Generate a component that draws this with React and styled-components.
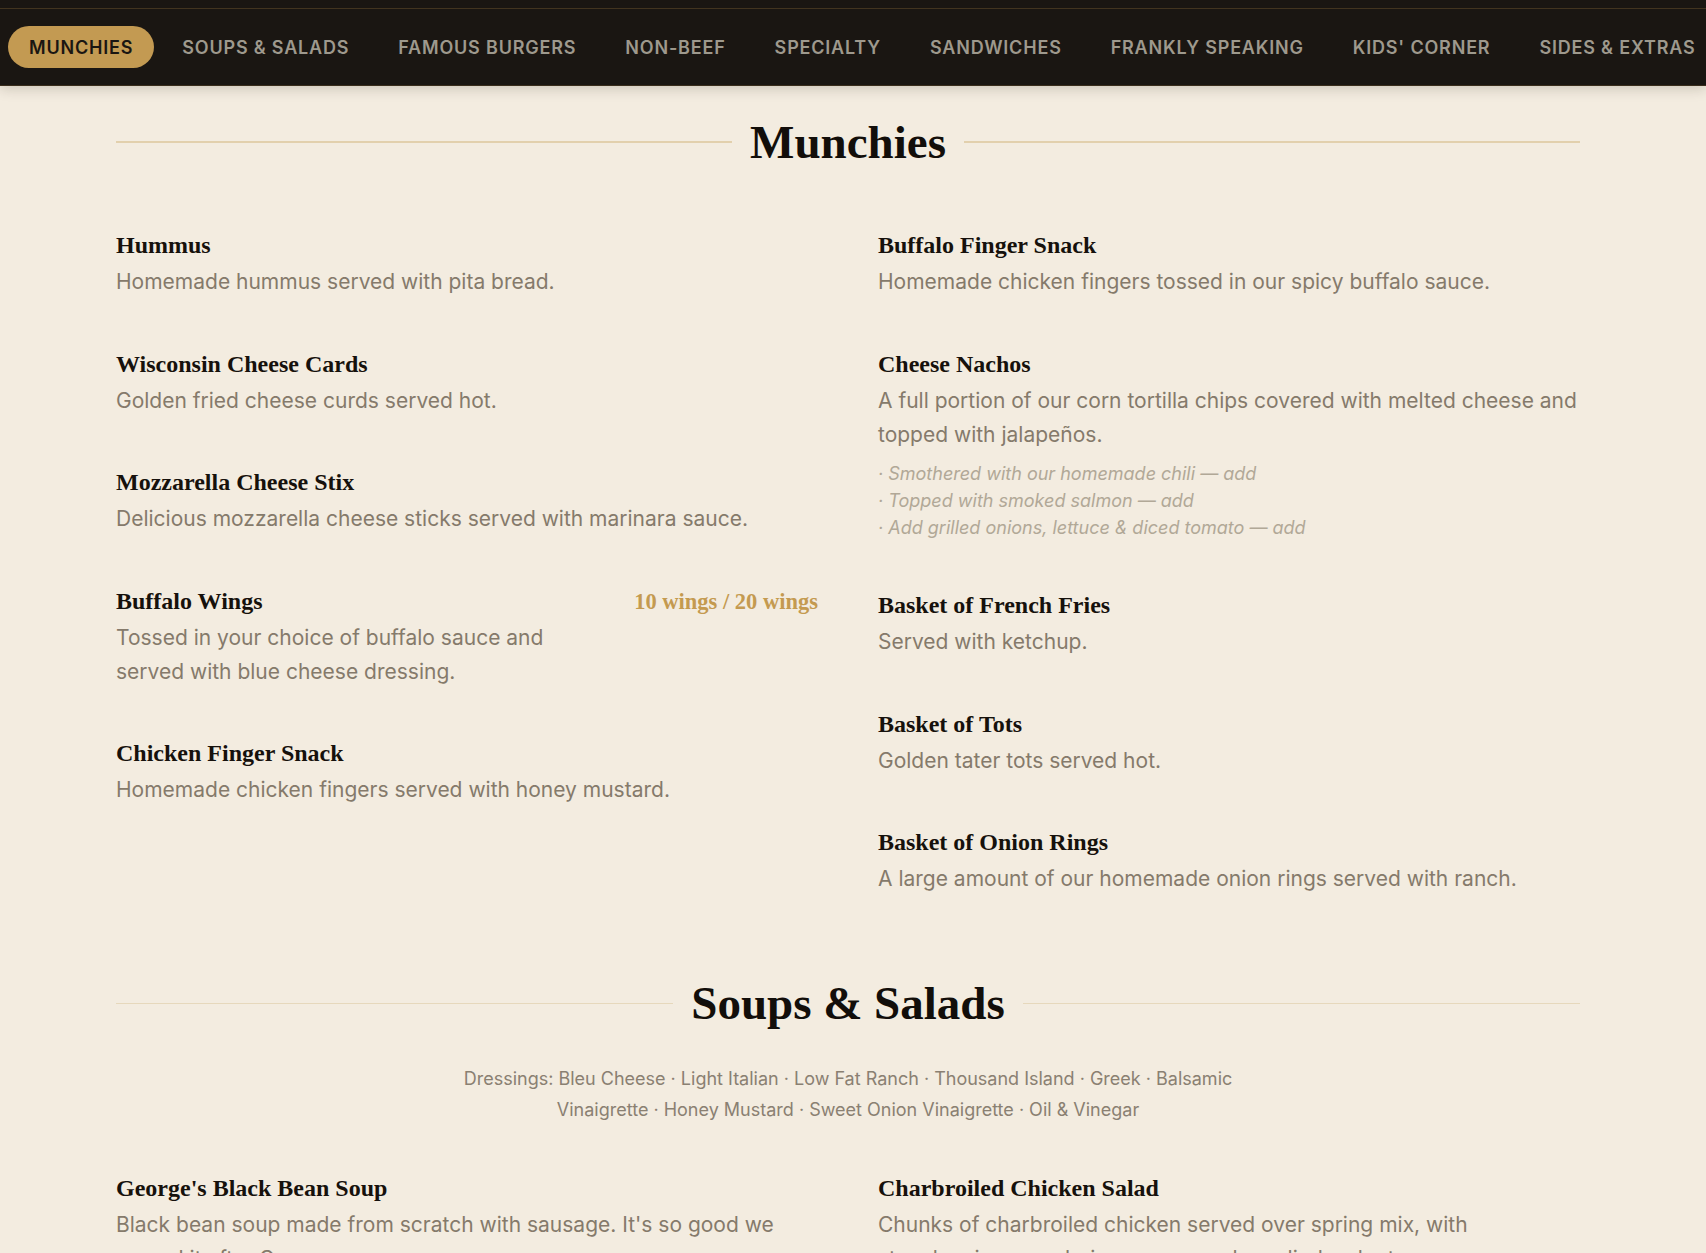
import React from 'react'
import styled, { createGlobalStyle } from 'styled-components';

const GlobalStyle = createGlobalStyle`
    body {
        margin: 0;
        background-color: #f3ece0;
        font-family: Inter, "Noto Sans", sans-serif;
    }
`;

const Header = styled.header`
    background-color: #1a1612;
    border-top: 8px solid #1a1612;
    box-shadow: 0 3px 12px rgba(40, 28, 12, 0.18);
`;

const NavBar = styled.nav`
    display: flex;
    align-items: center;
    gap: 7px;
    height: 76px;
    padding: 0 8px;
    overflow: hidden;
    border-top: 1px solid #42341f;
    border-bottom: 1px solid #3a2d1c;
`;

const NavItem = styled.a`
    flex-shrink: 0;
    display: flex;
    align-items: center;
    height: 42px;
    padding: 0 21px;
    border-radius: 21px;
    font-size: 18px;
    font-weight: 600;
    letter-spacing: 0.045em;
    text-transform: uppercase;
    white-space: nowrap;
    text-decoration: none;
    color: ${({ $active }) => ($active ? '#1a1612' : '#9e998d')};
    background-color: ${({ $active }) => ($active ? '#c39a52' : 'transparent')};
`;

const Main = styled.main`
    width: 1464px;
    margin-left: 116px;
`;

const Section = styled.section`
    padding: 28px 0 51px;
`;

const TitleRow = styled.div`
    display: flex;
    align-items: center;
    gap: 18px;
    margin-bottom: ${({ $compact }) => ($compact ? '33px' : '60px')};
`;

const Rule = styled.div`
    flex: 1;
    height: ${({ $active }) => ($active ? '2px' : '1px')};
    background-color: ${({ $active }) => ($active ? '#e2d0ad' : '#e6d8bc')};
`;

const Title = styled.h2`
    margin: 0;
    font-family: "Liberation Serif", "Times New Roman", serif;
    font-weight: 700;
    font-size: 47px;
    line-height: 56px;
    color: #120e0a;
`;

const Note = styled.p`
    max-width: 800px;
    margin: 0 auto 48px;
    text-align: center;
    font-size: 18px;
    line-height: 30.5px;
    color: #8a8072;
`;

const Grid = styled.div`
    display: grid;
    grid-template-columns: 1fr 1fr;
    column-gap: 60px;
    align-items: start;
`;

const Column = styled.div`
    display: flex;
    flex-direction: column;
    gap: 49.6px;
`;

const Item = styled.div`
    display: flex;
    flex-direction: column;
`;

const ItemHead = styled.div`
    display: flex;
    justify-content: space-between;
    align-items: baseline;
    gap: 20px;
`;

const Name = styled.h3`
    margin: 0;
    font-family: "Liberation Serif", "Times New Roman", serif;
    font-weight: 700;
    font-size: 24px;
    line-height: 31px;
    color: #16110c;
`;

const Price = styled.span`
    font-family: "Liberation Serif", "Times New Roman", serif;
    font-weight: 700;
    font-size: 22.5px;
    color: #c49a50;
    white-space: nowrap;
`;

const Desc = styled.p`
    margin: 4px 0 0;
    max-width: ${({ $narrow }) => ($narrow ? '500px' : 'none')};
    font-size: 21px;
    line-height: 34px;
    color: #857a6b;
`;

const Options = styled.ul`
    list-style: none;
    margin: 8px 0 0;
    padding: 0;
`;

const Option = styled.li`
    font-size: 18px;
    font-style: italic;
    line-height: 27px;
    color: #b1a897;
`;

const navItems = [
    'Munchies', 'Soups & Salads', 'Famous Burgers', 'Non-Beef', 'Specialty',
    'Sandwiches', 'Frankly Speaking', "Kids' Corner", 'Sides & Extras',
];

const munchies = [
    [
        { name: 'Hummus', desc: 'Homemade hummus served with pita bread.' },
        { name: 'Wisconsin Cheese Cards', desc: 'Golden fried cheese curds served hot.' },
        { name: 'Mozzarella Cheese Stix', desc: 'Delicious mozzarella cheese sticks served with marinara sauce.' },
        { name: 'Buffalo Wings', price: '10 wings / 20 wings', desc: 'Tossed in your choice of buffalo sauce and served with blue cheese dressing.' },
        { name: 'Chicken Finger Snack', desc: 'Homemade chicken fingers served with honey mustard.' },
    ],
    [
        { name: 'Buffalo Finger Snack', desc: 'Homemade chicken fingers tossed in our spicy buffalo sauce.' },
        {
            name: 'Cheese Nachos',
            desc: 'A full portion of our corn tortilla chips covered with melted cheese and topped with jalapeños.',
            options: [
                'Smothered with our homemade chili — add',
                'Topped with smoked salmon — add',
                'Add grilled onions, lettuce & diced tomato — add',
            ],
        },
        { name: 'Basket of French Fries', desc: 'Served with ketchup.' },
        { name: 'Basket of Tots', desc: 'Golden tater tots served hot.' },
        { name: 'Basket of Onion Rings', desc: 'A large amount of our homemade onion rings served with ranch.' },
    ],
];

const soups = [
    [
        { name: "George's Black Bean Soup", desc: "Black bean soup made from scratch with sausage. It's so good we named it after George." },
    ],
    [
        { name: 'Charbroiled Chicken Salad', desc: 'Chunks of charbroiled chicken served over spring mix, with strawberries, mandarin oranges and candied walnuts.' },
    ],
];

const MenuItem = ({ item }) => (
    <Item>
        <ItemHead>
            <Name>{item.name}</Name>
            {item.price && <Price>{item.price}</Price>}
        </ItemHead>
        <Desc $narrow={!!item.price}>{item.desc}</Desc>
        {item.options && (
            <Options>
                {item.options.map((o) => (
                    <Option key={o}>· {o}</Option>
                ))}
            </Options>
        )}
    </Item>
);

const MenuSection = ({ title, note, columns, active }) => (
    <Section>
        <TitleRow $compact={!!note}>
            <Rule $active={active} />
            <Title>{title}</Title>
            <Rule $active={active} />
        </TitleRow>
        {note && <Note>{note}</Note>}
        <Grid>
            {columns.map((col, i) => (
                <Column key={i}>
                    {col.map((item) => (
                        <MenuItem key={item.name} item={item} />
                    ))}
                </Column>
            ))}
        </Grid>
    </Section>
);

const App = () => {
    return (
        <>
            <GlobalStyle />
            <Header>
                <NavBar>
                    {navItems.map((n, i) => (
                        <NavItem key={n} href="#" $active={i === 0}>{n}</NavItem>
                    ))}
                </NavBar>
            </Header>
            <Main>
                <MenuSection title="Munchies" columns={munchies} active />
                <MenuSection
                    title="Soups & Salads"
                    note="Dressings: Bleu Cheese · Light Italian · Low Fat Ranch · Thousand Island · Greek · Balsamic Vinaigrette · Honey Mustard · Sweet Onion Vinaigrette · Oil & Vinegar"
                    columns={soups}
                />
            </Main>
        </>
    )
}

export default App
